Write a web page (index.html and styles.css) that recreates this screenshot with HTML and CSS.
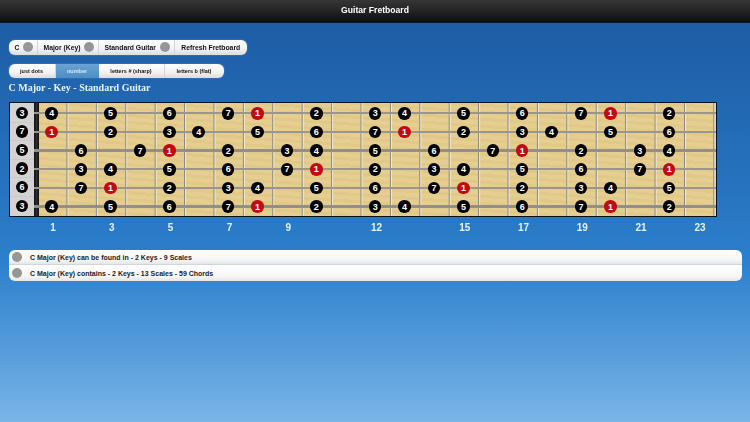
FILE: index.html
```html
<!DOCTYPE html>
<html lang="en">
<head>
<meta charset="utf-8">
<title>Guitar Fretboard</title>
<link rel="stylesheet" href="styles.css">
</head>
<body>
<header class="topbar">Guitar Fretboard</header>
<main class="content">
  <nav class="pill pill-main">
    <div class="seg seg-c">C<span class="dot"></span></div>
    <div class="seg seg-key">Major (Key)<span class="dot"></span></div>
    <div class="seg seg-guitar">Standard Guitar<span class="dot"></span></div>
    <div class="seg seg-refresh">Refresh Fretboard</div>
  </nav>
  <nav class="pill pill-mode">
    <div class="mode mode-dots">just dots</div>
    <div class="mode mode-number active">number</div>
    <div class="mode mode-sharp">letters # (sharp)</div>
    <div class="mode mode-flat">letters b (flat)</div>
  </nav>
  <h1 class="title">C Major - Key - Standard Guitar</h1>
  <section class="board">
    <div class="open-col">
      <div class="open-cell"><span class="note">3</span></div><div class="open-cell"><span class="note">7</span></div><div class="open-cell"><span class="note">5</span></div><div class="open-cell"><span class="note">2</span></div><div class="open-cell"><span class="note">6</span></div><div class="open-cell"><span class="note">3</span></div>
    </div>
    <div class="nut"></div>
    <div class="neck">
      <div class="string s1">
        <span class="note f1">4</span><span class="note f3">5</span><span class="note f5">6</span><span class="note f7">7</span><span class="note root f8">1</span><span class="note f10">2</span><span class="note f12">3</span><span class="note f13">4</span><span class="note f15">5</span><span class="note f17">6</span><span class="note f19">7</span><span class="note root f20">1</span><span class="note f22">2</span>
      </div>
      <div class="string s2">
        <span class="note root f1">1</span><span class="note f3">2</span><span class="note f5">3</span><span class="note f6">4</span><span class="note f8">5</span><span class="note f10">6</span><span class="note f12">7</span><span class="note root f13">1</span><span class="note f15">2</span><span class="note f17">3</span><span class="note f18">4</span><span class="note f20">5</span><span class="note f22">6</span>
      </div>
      <div class="string s3">
        <span class="note f2">6</span><span class="note f4">7</span><span class="note root f5">1</span><span class="note f7">2</span><span class="note f9">3</span><span class="note f10">4</span><span class="note f12">5</span><span class="note f14">6</span><span class="note f16">7</span><span class="note root f17">1</span><span class="note f19">2</span><span class="note f21">3</span><span class="note f22">4</span>
      </div>
      <div class="string s4">
        <span class="note f2">3</span><span class="note f3">4</span><span class="note f5">5</span><span class="note f7">6</span><span class="note f9">7</span><span class="note root f10">1</span><span class="note f12">2</span><span class="note f14">3</span><span class="note f15">4</span><span class="note f17">5</span><span class="note f19">6</span><span class="note f21">7</span><span class="note root f22">1</span>
      </div>
      <div class="string s5">
        <span class="note f2">7</span><span class="note root f3">1</span><span class="note f5">2</span><span class="note f7">3</span><span class="note f8">4</span><span class="note f10">5</span><span class="note f12">6</span><span class="note f14">7</span><span class="note root f15">1</span><span class="note f17">2</span><span class="note f19">3</span><span class="note f20">4</span><span class="note f22">5</span>
      </div>
      <div class="string s6">
        <span class="note f1">4</span><span class="note f3">5</span><span class="note f5">6</span><span class="note f7">7</span><span class="note root f8">1</span><span class="note f10">2</span><span class="note f12">3</span><span class="note f13">4</span><span class="note f15">5</span><span class="note f17">6</span><span class="note f19">7</span><span class="note root f20">1</span><span class="note f22">2</span>
      </div>
    </div>
  </section>
  <div class="fret-labels">
    <span class="f1">1</span><span class="f3">3</span><span class="f5">5</span><span class="f7">7</span><span class="f9">9</span><span class="f12">12</span><span class="f15">15</span><span class="f17">17</span><span class="f19">19</span><span class="f21">21</span><span class="f23">23</span>
  </div>
  <section class="list">
    <div class="row"><span class="dot"></span>C Major (Key) can be found in - 2 Keys - 9 Scales</div>
    <div class="row"><span class="dot"></span>C Major (Key) contains - 2 Keys - 13 Scales - 59 Chords</div>
  </section>
</main>
</body>
</html>
```
FILE: styles.css
```css
* { box-sizing: border-box; }
html, body { margin: 0; height: 100%; }
body {
  width: 750px;
  height: 422px;
  overflow: hidden;
  font-family: "Liberation Sans", Arial, sans-serif;
  background: linear-gradient(180deg, #1d5ba2 0%, #1f62ab 15%, #2773bf 45%, #2c80cd 62%, #5a9fdc 85%, #7ab5e7 100%);
}
.topbar {
  height: 22.5px;
  background: linear-gradient(180deg, #363636 0%, #232323 50%, #0f0f0f 100%);
  border-bottom: 1px solid #0a1626;
  color: #fff;
  font-size: 8.6px;
  font-weight: 700;
  line-height: 21px;
  text-align: center;
  filter: blur(.25px);
}
.content {
  padding: 17px 8.5px 0;
  display: flex;
  flex-direction: column;
  align-items: flex-start;
  filter: blur(.3px);
}
.pill {
  display: flex;
  background: linear-gradient(180deg, #fff 0%, #f2f2f2 60%, #dcdcdc 100%);
  border-radius: 6px;
  overflow: hidden;
  color: #111;
  font-weight: 700;
  box-shadow: 0 0 1px rgba(255,255,255,.7);
}
.pill-main { height: 15.5px; font-size: 6.8px; }
.seg {
  display: flex;
  align-items: center;
  justify-content: space-between;
  padding: 0 3.5px 0 6px;
  border-right: 1px solid #d4d4d4;
}
.seg-c { width: 29px; }
.seg-key { width: 61px; }
.seg-guitar { width: 76px; }
.seg-refresh { width: 72.5px; border-right: 0; padding: 0; justify-content: center; }
.dot {
  width: 10px;
  height: 10px;
  border-radius: 50%;
  background: #969696;
  flex: none;
}
.pill-mode { height: 14.5px; margin-top: 8.5px; font-size: 5.5px; }
.mode {
  display: flex;
  align-items: center;
  justify-content: center;
  border-right: 1px solid #d4d4d4;
}
.mode-dots { width: 47px; }
.mode-number { width: 43px; }
.mode-sharp { width: 66px; }
.mode-flat { width: 59px; border-right: 0; }
.active { background: linear-gradient(180deg, #6ba3d3 0%, #4c8dc6 100%); color: #d6e7f5; border-right: 0; }
.title {
  margin: 3px 0 0;
  height: 17px;
  font: 700 10px/14px "Liberation Serif", "Times New Roman", serif;
  color: #eaf3fb;
}
.board {
  margin-top: 4px;
  width: 708px;
  height: 114.5px;
  display: flex;
  border: 1px solid #060f1a;
  background: #e4cd8d;
  overflow: hidden;
}
.open-col {
  width: 24px;
  display: flex;
  flex-direction: column;
  background: #d3d3d3;
}
.open-cell {
  height: 18.67px;
  padding-left: 1px;
  display: flex;
  align-items: center;
  justify-content: center;
  border-bottom: 1px solid #c9c9c9;
}
.open-cell:last-child { border-bottom: 0; }
.nut { width: 5px; background: linear-gradient(90deg, #111, #2d2d2d, #111); }
.neck {
  flex: 1;
  display: flex;
  flex-direction: column;
  background:
    repeating-linear-gradient(90deg, transparent 0, transparent 27.3px, #85857f 27.3px, #85857f 28.6px, #f2ecda 28.6px, #f2ecda 29.42px) 0 0 / 29.42px 100% repeat-x,
    repeating-linear-gradient(4deg, rgba(150,110,30,.06) 0 3px, transparent 3px 7px),
    #e5ce90;
}
.open-col, .neck { padding-top: 1px; }
.string {
  flex: none;
  height: 18.67px;
  display: grid;
  grid-template-columns: repeat(23, 29.42px);
  justify-items: center;
  align-items: center;
  margin-left: -5px;
  padding-left: 3.5px;
  background: linear-gradient(180deg, transparent 8.3px, #9a968a 8.3px, #9a968a 10.3px, transparent 10.3px);
}
.string .note { grid-row: 1; }
.s3, .s6 { background: linear-gradient(180deg, transparent 8px, #948f83 8px, #948f83 10.8px, transparent 10.8px); }
.note {
  display: flex;
  align-items: center;
  justify-content: center;
  width: 12.5px;
  height: 12.5px;
  border-radius: 50%;
  background: #000;
  color: #fff;
  font-size: 9px;
  font-weight: 700;
}
.root { background: #bd0c12; }
.f1 { grid-column: 1; } .f2 { grid-column: 2; } .f3 { grid-column: 3; } .f4 { grid-column: 4; }
.f5 { grid-column: 5; } .f6 { grid-column: 6; } .f7 { grid-column: 7; } .f8 { grid-column: 8; }
.f9 { grid-column: 9; } .f10 { grid-column: 10; } .f12 { grid-column: 12; } .f13 { grid-column: 13; }
.f14 { grid-column: 14; } .f15 { grid-column: 15; } .f16 { grid-column: 16; } .f17 { grid-column: 17; }
.f18 { grid-column: 18; } .f19 { grid-column: 19; } .f20 { grid-column: 20; } .f21 { grid-column: 21; }
.f22 { grid-column: 22; } .f23 { grid-column: 23; }
.fret-labels {
  display: grid;
  grid-template-columns: repeat(23, 29.42px);
  justify-items: center;
  margin: 4px 0 0 29.8px;
  height: 14px;
  color: #e6f2fc;
  font-size: 10px;
  font-weight: 700;
  line-height: 14px;
}
.list {
  margin-top: 15.5px;
  width: 733px;
  border-radius: 6px;
  overflow: hidden;
  color: #1c1c1c;
  font-size: 7px;
  font-weight: 700;
}
.row {
  display: flex;
  align-items: center;
  height: 15.4px;
  padding-left: 3px;
  background: linear-gradient(180deg, #fff 0%, #f6f6f6 70%, #e6e6e6 100%);
  border-bottom: 1px solid #cfd6de;
}
.row:last-child { border-bottom: 0; }
.row .dot { margin-right: 8.5px; }
```
